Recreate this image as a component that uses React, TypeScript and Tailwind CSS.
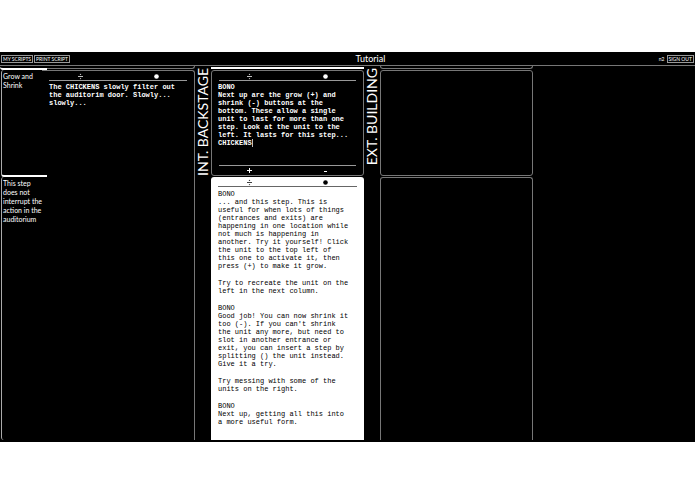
import type { ReactNode } from "react";

const mono = "font-['Liberation_Mono',monospace] text-[7px] leading-[8px]";

function DotRow({ children, place }: { children: ReactNode; place: "top" | "bottom" }) {
  return (
    <div className={place === "top" ? "flex h-[9px] pt-[2px]" : "flex h-[9px]"}>{children}</div>
  );
}

function IconButton({ label, children }: { label: string; children: ReactNode }) {
  return (
    <button type="button" aria-label={label} className="flex flex-1 items-center justify-center">
      <svg viewBox="0 0 7 7" className="size-[7px]" aria-hidden="true">
        {children}
      </svg>
    </button>
  );
}

function UnitTools() {
  return (
    <>
      <DotRow place="top">
        <IconButton label="Split unit">
          <g opacity="0.75">
            <path d="M1 3.5H6" stroke="currentColor" strokeWidth="1" />
            <circle cx="3.5" cy="1.4" r="0.7" fill="currentColor" />
            <circle cx="3.5" cy="5.6" r="0.7" fill="currentColor" />
          </g>
        </IconButton>
        <IconButton label="Unit color">
          <circle cx="3.5" cy="3.5" r="2.3" fill="currentColor" />
        </IconButton>
      </DotRow>
      <hr className="mx-[7px] border-t border-current opacity-60" />
    </>
  );
}

function ResizeTools() {
  return (
    <div className="mt-auto">
      <hr className="mx-[7px] border-t border-current opacity-60" />
      <DotRow place="bottom">
        <IconButton label="Grow unit">
          <path d="M1 3.5H6M3.5 1V6" stroke="currentColor" strokeWidth="1" />
        </IconButton>
        <IconButton label="Shrink unit">
          <path d="M2 4.5H5" stroke="currentColor" strokeWidth="1" />
        </IconButton>
      </DotRow>
    </div>
  );
}

function Lines({ items }: { items: string[] }) {
  return (
    <p>
      {items.map((line) => (
        <span key={line} className="block whitespace-nowrap">
          {line}
        </span>
      ))}
    </p>
  );
}

function LocationTitle({ children }: { children: ReactNode }) {
  return (
    <h2 className="w-4 shrink-0 rotate-180 self-start pb-[2px] text-[14px] leading-4 whitespace-nowrap [writing-mode:vertical-rl]">
      {children}
    </h2>
  );
}

const frame = "rounded-[3px] border border-[#777]";
const tail = "h-[3px] shrink-0";
const barButton = "border border-[#999] px-px whitespace-nowrap";

const steps = [
  { text: "Grow and Shrink", size: "h-[107px]" },
  { text: "This step does not interrupt the action in the auditorium", size: "flex-1" },
];

export default function App() {
  return (
    <div className="min-h-screen bg-white pt-[52px] font-[Lato,sans-serif]">
      <div className="overflow-hidden bg-black pb-[2px] text-white">
        <header className="flex h-[14px] items-center border-b border-[#777] px-px">
          <nav className="flex gap-px text-[5px] leading-[6px]">
            <button type="button" className={barButton}>MY SCRIPTS</button>
            <button type="button" className={barButton}>PRINT SCRIPT</button>
          </nav>
          <h1 className="flex-1 pl-3 text-center text-[9px] leading-3">Tutorial</h1>
          <div className="flex items-center gap-[2px] text-[5px] leading-[6px]">
            <span>n2</span>
            <button type="button" className={barButton}>SIGN OUT</button>
          </div>
        </header>

        <main className="flex">
          <section className="z-10 -mr-[5px] flex w-[47px] shrink-0 flex-col">
            <div className="h-[4px] shrink-0 rounded-bl-[3px] border-b-2 border-white bg-black" />
            {steps.map((step) => (
              <p
                key={step.text}
                className={`${step.size} ml-px rounded-l-[3px] border-l border-[#aaa] pt-[2px] pr-[2px] pl-px text-[7px] leading-[9px] first-of-type:border-b-2 first-of-type:border-b-white`}
              >
                {step.text}
              </p>
            ))}
          </section>

          <section className="flex w-[153px] shrink-0 flex-col gap-px">
            <div className={`${tail} rounded-br-[3px] border-r border-b border-[#777]`} />
            <article className="flex-1 rounded-tr-[3px] border-t border-r border-[#777]">
              <UnitTools />
              <div className={`${mono} px-[7px] pt-[2px] font-bold`}>
                <Lines items={["The CHICKENS slowly filter out", "the auditorim door. Slowly...", "slowly..."]} />
              </div>
            </article>
          </section>

          <LocationTitle>INT. BACKSTAGE</LocationTitle>
          <section className="flex w-[153px] shrink-0 flex-col gap-px">
            <div className={`${tail} border-b-2 border-white`} />
            <article className={`${frame} flex h-[106px] flex-col`}>
              <UnitTools />
              <div className={`${mono} px-[6px] pt-[2px] font-bold`}>
                <Lines
                  items={[
                    "BONO",
                    "Next up are the grow (+) and",
                    "shrink (-) buttons at the",
                    "bottom. These allow a single",
                    "unit to last for more than one",
                    "step. Look at the unit to the",
                    "left. It lasts for this step...",
                  ]}
                />
                <p>
                  <span className="border-r border-[#bbb]">CHICKENS</span>
                </p>
              </div>
              <ResizeTools />
            </article>
            <article className="flex-1 rounded-t-[3px] bg-white text-black">
              <UnitTools />
              <div className={`${mono} flex flex-col gap-[9px] px-[7px] pt-[3px] pb-[14px]`}>
                <Lines
                  items={[
                    "BONO",
                    "... and this step. This is",
                    "useful for when lots of things",
                    "(entrances and exits) are",
                    "happening in one location while",
                    "not much is happening in",
                    "another. Try it yourself! Click",
                    "the unit to the top left of",
                    "this one to activate it, then",
                    "press (+) to make it grow.",
                  ]}
                />
                <Lines items={["Try to recreate the unit on the", "left in the next column."]} />
                <Lines
                  items={[
                    "BONO",
                    "Good job! You can now shrink it",
                    "too (-). If you can't shrink",
                    "the unit any more, but need to",
                    "slot in another entrance or",
                    "exit, you can insert a step by",
                    "splitting () the unit instead.",
                    "Give it a try.",
                  ]}
                />
                <Lines items={["Try messing with some of the", "units on the right."]} />
                <Lines items={["BONO", "Next up, getting all this into", "a more useful form."]} />
              </div>
            </article>
          </section>

          <LocationTitle>EXT. BUILDING</LocationTitle>
          <section className="flex w-[153px] shrink-0 flex-col gap-px">
            <div className={`${tail} rounded-b-[3px] border-x border-b border-[#777]`} />
            <article className={`${frame} h-[106px]`} />
            <article className="flex-1 rounded-t-[3px] border-x border-t border-[#777]" />
          </section>
        </main>
      </div>
    </div>
  );
}
